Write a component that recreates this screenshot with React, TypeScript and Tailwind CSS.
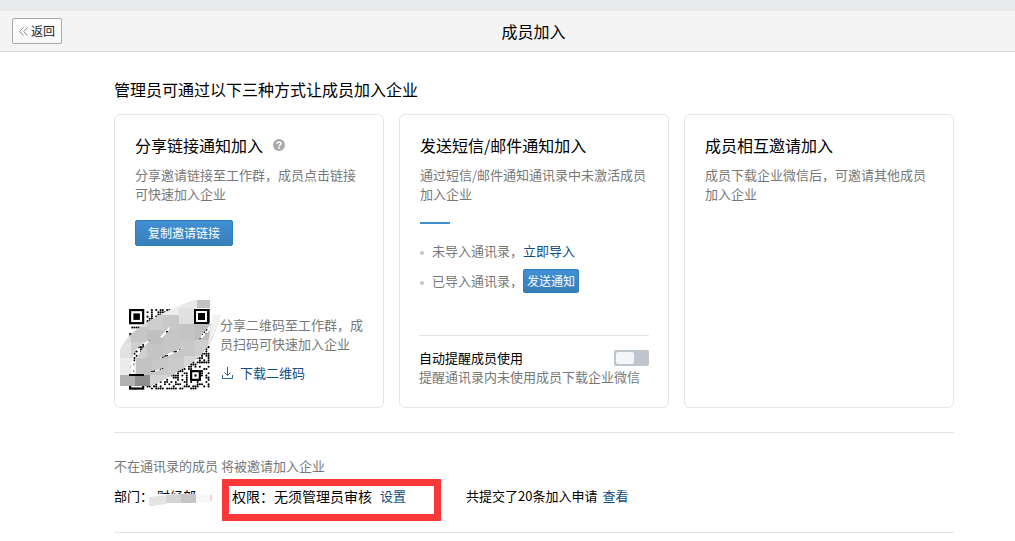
import type { ReactNode } from 'react';

// 二维码：version 5，37×37 模块
const QR_SIZE = 37;
const QR_FINDERS = [
  { x: 0, y: 0 },
  { x: 30, y: 0 },
  { x: 0, y: 30 },
];

function isReserved(x: number, y: number) {
  const inFinder = QR_FINDERS.some((f) => x >= f.x - 1 && x <= f.x + 7 && y >= f.y - 1 && y <= f.y + 7);
  const inAlign = x >= 28 && x <= 32 && y >= 28 && y <= 32;
  return inFinder || inAlign;
}

function buildModules() {
  const list: { x: number; y: number }[] = [];
  let seed = 20;
  for (let y = 0; y < QR_SIZE; y++) {
    for (let x = 0; x < QR_SIZE; x++) {
      seed = (seed * 1103515245 + 12345) % 2147483648;
      if (!isReserved(x, y) && seed / 2147483648 > 0.54) list.push({ x, y });
    }
  }
  return list;
}

const MODULES = buildModules();

// 马赛克色块
const MOSAIC = [
  { x: 75, y: 0, fill: '#c1c2c4' },
  { x: 59, y: 0, fill: '#e8e8e8' },
  { x: 43, y: 0, fill: '#ececec' },
  { x: 27, y: 0, fill: '#e6e6e6' },
  { x: 27, y: 15, fill: '#cecece' },
  { x: 43, y: 15, fill: '#c8c8c8' },
  { x: 59, y: 8, fill: '#e0e0e0' },
  { x: 75, y: 8, fill: '#f0f0f0' },
  { x: 11, y: 27, fill: '#c6c6c6' },
  { x: 27, y: 30, fill: '#c0c0c0' },
  { x: 43, y: 30, fill: '#c6c6c6' },
  { x: 59, y: 24, fill: '#c4c4c4' },
  { x: 75, y: 24, fill: '#bebebe' },
  { x: 0, y: 42, fill: '#e2e2e2' },
  { x: 11, y: 42, fill: '#d0d0d0' },
  { x: 27, y: 44, fill: '#c4c4c4' },
  { x: 43, y: 44, fill: '#c6c6c6' },
  { x: 59, y: 40, fill: '#c8c8c8' },
  { x: 75, y: 40, fill: '#cecece' },
  { x: 0, y: 58, fill: '#ececec' },
  { x: 16, y: 58, fill: '#c2c2c2' },
  { x: 32, y: 60, fill: '#c8c8c8' },
  { x: 48, y: 58, fill: '#cbcbcb' },
  { x: 64, y: 56, fill: '#d8d8d8' },
  { x: 0, y: 75, fill: '#b2b2b2' },
  { x: 15, y: 75, fill: '#8f8f8f' },
  { x: 30, y: 75, fill: '#d4d4d4' },
];

// 涂抹区域，内部空出几条缝隙露出底下的二维码
const SMEAR =
  'M75 0H90V8H75V23H92L92 15H100Q97 32 88 46Q77 62 60 70Q45 80 30 86H0V50Q5 38 20 27Q45 10 75 0Z' +
  'M31 39Q20 44 15 51Q9 60 11 75H15Q12 66 17 57Q23 47 31 39Z' +
  'M50 26L40 37L42 38L49 31Z' +
  'M64 47Q50 52 38 59Q52 57 64 47Z' +
  'M46 67L31 71V73L43 69Z' +
  'M90 25Q82 33 77 42Q84 37 90 30Z';

function QrCode() {
  return (
    <svg className="block shrink-0" width="100" height="90" viewBox="0 0 100 90" role="img" aria-label="二维码">
      <g transform="translate(9 9) scale(2.18)">
        {MODULES.map((m) => (
          <circle key={`${m.x}-${m.y}`} cx={m.x + 0.5} cy={m.y + 0.5} r="0.48" fill="#000" />
        ))}
        {QR_FINDERS.map((f) => (
          <g key={`${f.x}-${f.y}`}>
            <rect x={f.x + 0.5} y={f.y + 0.5} width="6" height="6" fill="#fff" stroke="#000" />
            <rect x={f.x + 2} y={f.y + 2} width="3" height="3" fill="#000" />
          </g>
        ))}
        <rect x="28.5" y="28.5" width="4" height="4" fill="#fff" stroke="#000" />
        <rect x="30" y="30" width="1" height="1" fill="#000" />
      </g>
      <defs>
        <clipPath id="smear">
          <path d={SMEAR} clipRule="evenodd" />
        </clipPath>
      </defs>
      <g clipPath="url(#smear)">
        <rect width="100" height="90" fill="#dcdcdc" />
        {MOSAIC.map((b) => (
          <rect key={`${b.x}-${b.y}`} x={b.x} y={b.y} width="18" height="20" fill={b.fill} />
        ))}
        <path d="M91 15H100Q96 32 88 46L90 32Z" fill="#f1f1f1" />
      </g>
      <path d="M9 75H24" stroke="#000" strokeWidth="2" />
      {/* 右上定位块盖在涂抹之上 */}
      <rect x="75" y="10" width="13" height="13" fill="#fff" stroke="#000" strokeWidth="2" />
      <rect x="78" y="13" width="7" height="7" fill="#000" />
    </svg>
  );
}

function HelpIcon() {
  return (
    <svg width="12" height="12" viewBox="0 0 12 12" aria-hidden="true">
      <circle cx="6" cy="6" r="6" fill="#a9a9a9" />
      <path d="M4 4.8C4 2.4 8 2.4 8 4.5C8 5.8 6.1 5.8 6.1 7.2" fill="none" stroke="#fff" strokeWidth="1.5" />
      <rect x="5.3" y="8" width="1.6" height="1.6" fill="#fff" />
    </svg>
  );
}

function DownloadIcon() {
  return (
    <svg width="12" height="12" viewBox="0 0 12 12" fill="none" stroke="#2f6391" aria-hidden="true">
      <path d="M5.5 0V8.5M2.5 5.5L5.5 8.5L8.5 5.5M0.5 8V11.5H10.5V8" />
    </svg>
  );
}

function BackIcon() {
  return (
    <svg width="9" height="9" viewBox="0 0 9 9" fill="none" stroke="#888" aria-hidden="true">
      <path d="M4.5 0.5L0.7 4.5L4.5 8.5M8.5 0.5L4.7 4.5L8.5 8.5" />
    </svg>
  );
}

function Card({ title, desc, help, children }: { title: string; desc: string; help?: boolean; children?: ReactNode }) {
  return (
    <section className="flex min-h-[294px] flex-col rounded-md border border-[#e4e6e9] px-5 pt-[18px]">
      <div className="flex items-center gap-2.5">
        <h3 className="text-base leading-6">{title}</h3>
        {help && (
          <button type="button" aria-label="帮助">
            <HelpIcon />
          </button>
        )}
      </div>
      <p className="mt-2 leading-[19px] text-[#787878]">{desc}</p>
      {children}
    </section>
  );
}

const BLUE_BUTTON =
  'rounded-xs border border-[#2b7dbc] bg-linear-to-b from-[#428fd6] to-[#377fb8] text-xs text-white';

export default function App() {
  return (
    <div className="min-h-screen bg-white font-['Noto_Sans_CJK_SC',sans-serif] text-[13px] text-black">
      <div className="h-[11px] bg-[#e8e9eb]" />
      <header className="grid h-[41px] grid-cols-[50px_1fr] items-center border-b border-[#dcdcdc] bg-[#f4f4f4] pl-3">
        <button
          type="button"
          className="flex h-[26px] items-center justify-center gap-[3px] rounded-xs border border-[#a9a9a9] bg-linear-to-b from-white to-[#f8f8f8] text-xs text-[#222]"
        >
          <BackIcon />
          返回
        </button>
        <h1 className="pr-[10px] text-center text-base">成员加入</h1>
      </header>

      <main className="pt-[25px] pr-[61px] pl-[114px]">
        <h2 className="text-base leading-6">管理员可通过以下三种方式让成员加入企业</h2>

        <div className="mt-[13px] grid grid-cols-3 gap-[15px]">
          <Card title="分享链接通知加入" desc="分享邀请链接至工作群，成员点击链接可快速加入企业" help>
            <button type="button" className={`${BLUE_BUTTON} mt-[17px] h-[26px] self-start px-[12px]`}>
              复制邀请链接
            </button>
            <div className="-mx-[15px] mt-auto flex pb-[17px]">
              <QrCode />
              <div className="pt-[15px] pr-[15px]">
                <p className="leading-[19px] text-[#787878]">分享二维码至工作群，成员扫码可快速加入企业</p>
                <a href="#download" className="mt-2.5 flex items-center gap-1.5 pl-0.5 leading-[19px] text-[#0f4c81]">
                  <DownloadIcon />
                  下载二维码
                </a>
              </div>
            </div>
          </Card>

          <Card title="发送短信/邮件通知加入" desc="通过短信/邮件通知通讯录中未激活成员加入企业">
            <div className="mt-[19px] h-0.5 w-[30px] bg-[#428fd6]" />
            <ul className="mt-[15px] space-y-1.5 text-[#787878]">
              <li className="flex h-6 items-center">
                <span className="mt-1 mr-2 size-1 rounded-full bg-[#c4c4c4]" />
                未导入通讯录，
                <a href="#import" className="text-[#0f4c81]">
                  立即导入
                </a>
              </li>
              <li className="flex h-6 items-center">
                <span className="mt-1 mr-2 size-1 rounded-full bg-[#c4c4c4]" />
                已导入通讯录，
                <button type="button" className={`${BLUE_BUTTON} h-6 px-[3px]`}>
                  发送通知
                </button>
              </li>
            </ul>
            <div className="-mx-px mt-auto border-t border-[#e3e3e3] pt-3 pb-[21px] leading-[19px]">
              <div className="flex items-center justify-between">
                <label htmlFor="remind">自动提醒成员使用</label>
                <input
                  id="remind"
                  type="checkbox"
                  role="switch"
                  className="h-4 w-[35px] appearance-none rounded-xs bg-[#bfc5cc] p-0.5 before:block before:h-3 before:w-[18px] before:rounded-xs before:bg-[#f4f5f8] checked:bg-[#428fd6] checked:before:ml-auto"
                />
              </div>
              <p className="text-[#787878]">提醒通讯录内未使用成员下载企业微信</p>
            </div>
          </Card>

          <Card title="成员相互邀请加入" desc="成员下载企业微信后，可邀请其他成员加入企业" />
        </div>

        <section className="mt-6 border-y border-[#e3e3e3] pt-[23px] pb-[11px]">
          <p className="leading-5 text-[#787878]">不在通讯录的成员 将被邀请加入企业</p>
          <div className="mt-[3px] flex items-center">
            <div className="relative w-[108px] pb-2 leading-5">
              部门：<span className="ml-1">财经部</span>
              <svg className="absolute top-1 left-8" width="68" height="18" viewBox="0 0 68 18" aria-hidden="true">
                <path d="M6 4H68V12H50V16H0V8Z" fill="#fff" />
                <path d="M3 7L21 5V14L12 15L8 16H3Z" fill="#e4e4e4" />
                <path d="M20 5L35 4V13H20Z" fill="#d4d4d4" />
                <path d="M35 4H50V13H35Z" fill="#c6c6c8" />
                <path d="M50 4L65 6V12L50 13Z" fill="#f6f6f6" />
                <path d="M64 5H66V11H64Z" fill="#fbd3d3" />
              </svg>
            </div>
            <div className="flex h-[42px] w-[219px] items-center border-7 border-[#fb3737] pb-2 pl-[3px]">
              <span className="text-sm">权限：无须管理员审核</span>
              <a href="#settings" className="ml-2 text-[#0f4c81]">
                设置
              </a>
            </div>
            <p className="ml-[25px] flex gap-[5px] pb-2">
              共提交了20条加入申请
              <a href="#requests" className="text-[#0f4c81]">
                查看
              </a>
            </p>
          </div>
        </section>
      </main>
    </div>
  );
}
